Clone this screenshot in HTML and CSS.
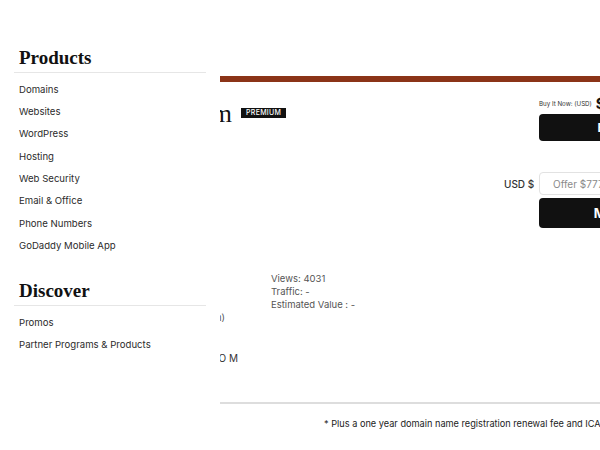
FILE: index.html
```html
<!DOCTYPE html>
<html lang="en">
<head>
    <meta charset="UTF-8">
    <meta name="viewport" content="width=device-width, initial-scale=1.0">
    <title>Wanderlust.com is for sale</title>
    <link rel="stylesheet" href="styles.css">
</head>
<body>
    <nav class="menu">
        <section class="menu-section">
            <h2>Products</h2>
            <ul>
                <li>Domains</li>
                <li>Websites</li>
                <li>WordPress</li>
                <li>Hosting</li>
                <li>Web Security</li>
                <li>Email &amp; Office</li>
                <li>Phone Numbers</li>
                <li>GoDaddy Mobile App</li>
            </ul>
        </section>
        <section class="menu-section">
            <h2>Discover</h2>
            <ul>
                <li>Promos</li>
                <li>Partner Programs &amp; Products</li>
            </ul>
        </section>
    </nav>

    <main class="page">
        <div class="listing">
            <div class="accent-bar"></div>

            <div class="listing-head">
                <div class="title">
                    <h1 class="domain">Wanderlust.com</h1>
                    <span class="badge">Premium</span>
                </div>

                <div class="buy-box">
                    <p class="price"><small>Buy It Now: (USD)</small><strong>$7,777</strong></p>
                    <button class="btn btn-buy">Buy It Now</button>
                    <label class="currency" for="offer">USD $</label>
                    <input class="offer" id="offer" type="text" placeholder="Offer $7777 or more">
                    <button class="btn btn-offer">Make Offer</button>
                </div>
            </div>

            <div class="stats">
                <ul class="stats-meta">
                    <li>Domain Age: 21 years</li>
                    <li>Registrar: GoDaddy</li>
                    <li>Listed: 2019</li>
                    <li class="stats-end">Category: Travel (Tourism)</li>
                </ul>
                <ul class="stats-numbers">
                    <li>Views: 4031</li>
                    <li>Traffic: -</li>
                    <li>Estimated Value : -</li>
                </ul>
            </div>

            <p class="tld">W A N D E R L U S T . C O M</p>

            <hr class="divider">

            <p class="footnote">* Plus a one year domain name registration renewal fee and ICANN fee.</p>
        </div>
    </main>
</body>
</html>
```

FILE: styles.css
```css
html, body {
    height: 100%;
}
body {
    font-family: Inter, "Liberation Sans", Arial, sans-serif;
    background: #fff;
    color: #2b2b2b;
    margin: 0;
    position: relative;
    overflow: hidden;
}

/* slide-out menu, sits over the page */
.menu {
    position: absolute;
    top: 0;
    left: 0;
    bottom: 0;
    width: 220px;
    box-sizing: border-box;
    padding: 45.5px 14px 0 14px;
    background: #fff;
    z-index: 2;
}
.menu-section + .menu-section {
    margin-top: 21.5px;
}
.menu h2 {
    font-family: "Liberation Serif", "Times New Roman", serif;
    font-size: 19px;
    line-height: 24px;
    font-weight: bold;
    color: #111;
    margin: 0;
    padding: 0 0 2.5px 5px;
    border-bottom: 1px solid #e6e6e6;
}
.menu ul {
    list-style: none;
    margin: 0;
    padding: 5.5px 0 0 5px;
}
.menu li {
    font-size: 9.6px;
    line-height: 22.35px;
    color: #2b2b2b;
}

/* listing page */
.page {
    padding-top: 76px;
}
.listing {
    width: 679px;
    margin-left: 40px;
}
.accent-bar {
    height: 6px;
    background: #8b3418;
}
.listing-head {
    display: grid;
    grid-template-columns: 1fr 215px;
    margin-top: 14px;
}
.title {
    display: flex;
    align-items: flex-start;
    gap: 9px;
}
.domain {
    width: 192px;
    margin: 0;
    padding-top: 3px;
    font-family: "Liberation Serif", "Times New Roman", serif;
    font-size: 26px;
    line-height: 30px;
    font-weight: normal;
    color: #111;
    text-align: right;
    white-space: nowrap;
}
.badge {
    margin-top: 12px;
    padding: 0 5px;
    background: #111;
    color: #fff;
    font-size: 7px;
    line-height: 10px;
    font-weight: 500;
    text-transform: uppercase;
    letter-spacing: 0.3px;
}

.buy-box {
    display: grid;
    grid-template-columns: minmax(0, 1fr) 180px;
    column-gap: 7px;
    align-items: center;
}
.price,
.btn,
.offer {
    grid-column: 2;
}
.price {
    margin: 0;
    font-size: 14px;
    line-height: 16px;
    white-space: nowrap;
    color: #111;
}
.price small {
    font-size: 6.2px;
    vertical-align: 3px;
    margin-right: 4px;
    color: #333;
}
.btn {
    border: none;
    border-radius: 4px;
    background: #111;
    color: #fff;
    font-family: inherit;
    font-size: 13px;
    font-weight: bold;
    cursor: pointer;
}
.btn-buy {
    height: 27px;
    margin-top: 2px;
    font-size: 12px;
}
.currency {
    grid-column: 1;
    margin-top: 31px;
    text-align: right;
    white-space: nowrap;
    font-size: 10px;
    font-weight: 500;
    color: #333;
}
.offer {
    height: 23px;
    margin-top: 31px;
    padding: 0 13px;
    box-sizing: border-box;
    border: 1px solid #e2e2e2;
    border-radius: 4px;
    font-family: inherit;
    font-size: 10px;
}
.offer::placeholder {
    color: #8a8a8a;
}
.btn-offer {
    height: 30px;
    margin-top: 3px;
}

.stats {
    display: grid;
    grid-template-columns: 185px 1fr;
    column-gap: 46px;
    margin-top: 44px;
    font-size: 9.5px;
    line-height: 13px;
    color: #555;
}
.stats ul {
    list-style: none;
    margin: 0;
    padding: 0;
}
.stats-end {
    text-align: right;
    white-space: nowrap;
}
.tld {
    width: 198px;
    margin: 28px 0 0;
    text-align: right;
    white-space: nowrap;
    font-size: 10px;
    line-height: 13px;
    color: #333;
}
.divider {
    height: 2px;
    margin: 37px 0 0;
    border: none;
    background: #ddd;
}
.footnote {
    margin: 13px 0 0;
    padding-left: 284px;
    white-space: nowrap;
    font-size: 9.2px;
    line-height: 13px;
    color: #222;
}
```
